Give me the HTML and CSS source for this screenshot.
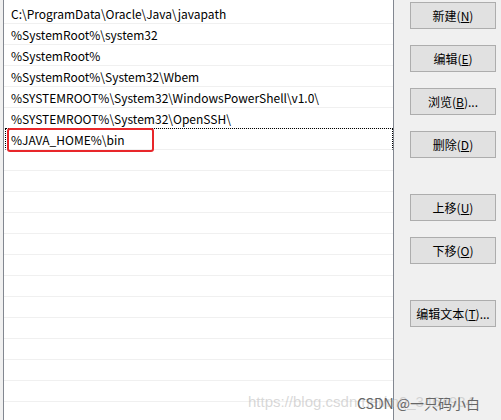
FILE: index.html
```html
<!DOCTYPE html>
<html lang="zh-CN">
<head>
  <meta charset="UTF-8" />
  <title>编辑环境变量</title>
  <link rel="stylesheet" href="styles.css">
</head>
<body>

  <div class="dialog">
    <!-- Path list -->
    <div class="path-list">
      <div class="row">C:\ProgramData\Oracle\Java\javapath</div>
      <div class="row">%SystemRoot%\system32</div>
      <div class="row">%SystemRoot%</div>
      <div class="row">%SystemRoot%\System32\Wbem</div>
      <div class="row">%SYSTEMROOT%\System32\WindowsPowerShell\v1.0\</div>
      <div class="row">%SYSTEMROOT%\System32\OpenSSH\</div>
      <div class="row focused">%JAVA_HOME%\bin</div>
      <div class="row"></div>
      <div class="row"></div>
      <div class="row"></div>
      <div class="row"></div>
      <div class="row"></div>
      <div class="row"></div>
      <div class="row"></div>
      <div class="row"></div>
      <div class="row"></div>
      <div class="row"></div>
      <div class="row"></div>
      <div class="row"></div>
      <div class="row"></div>
    </div>

    <!-- Buttons -->
    <div class="actions">
      <button class="btn">新建(<u>N</u>)</button>
      <button class="btn">编辑(<u>E</u>)</button>
      <button class="btn">浏览(<u>B</u>)...</button>
      <button class="btn">删除(<u>D</u>)</button>
      <button class="btn spaced">上移(<u>U</u>)</button>
      <button class="btn">下移(<u>O</u>)</button>
      <button class="btn spaced">编辑文本(<u>T</u>)...</button>
    </div>
  </div>

  <div class="watermark">
    <span class="wm-url">https://blog.csdn.net/m0_3464934</span>
    <span class="wm-name">CSDN @一只码小白</span>
  </div>

</body>
</html>
```

FILE: styles.css
```css
body {
  margin: 0;
  background: #f0f0f0;
  font-family: "Noto Sans CJK SC", "Noto Sans", sans-serif;
  font-size: 12px;
  color: #000;
  width: 501px;
  height: 420px;
  overflow: hidden;
  position: relative;
}

.dialog {
  display: flex;
  align-items: flex-start;
}

.path-list {
  margin-left: 3px;
  width: 389px;
  height: 430px;
  padding-top: 3px;
  background: #fff;
  border-left: 1px solid #828790;
  border-right: 1px solid #828790;
  overflow: hidden;
}

.row {
  height: 20px;
  line-height: 22px;
  padding-left: 7px;
  border-bottom: 1px solid #f0f0f0;
  white-space: nowrap;
}

.row.focused {
  position: relative;
  margin-top: -1px;
  border-top: 1px dotted #000;
  border-right: 1px dotted #000;
  border-left: 1px dotted #000;
  margin-left: 1px;
  padding-left: 5px;
}

/* red annotation box */
.row.focused::after {
  content: "";
  position: absolute;
  left: 1px;
  top: -1px;
  width: 143px;
  height: 20px;
  border: 2px solid #e8262a;
  border-radius: 3px;
}

.actions {
  display: flex;
  flex-direction: column;
  gap: 16px;
  margin-left: 16px;
  padding-top: 2px;
}

.btn {
  width: 86px;
  height: 27px;
  padding: 0;
  background: #e1e1e1;
  border: 1px solid #adadad;
  font-family: inherit;
  font-size: 12px;
  color: #000;
}

.btn.spaced {
  margin-top: 20px;
}

.watermark {
  position: absolute;
  left: 248px;
  top: 393px;
  white-space: nowrap;
}

.wm-url {
  font-family: "Liberation Sans", sans-serif;
  font-size: 15px;
  color: rgba(190, 190, 190, 0.6);
}

.wm-name {
  position: absolute;
  left: 109px;
  top: 0;
  font-size: 14px;
  color: #666;
}
```
